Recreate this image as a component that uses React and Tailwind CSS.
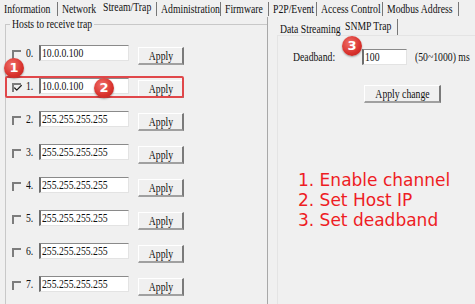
import { Check } from "lucide-react";

const tabs = [
  { name: "Information", w: "w-[58px]", sep: true },
  { name: "Network", w: "w-[41px]", sep: false },
  { name: "Stream/Trap", w: "w-[58px]", sep: true, active: true },
  { name: "Administration", w: "w-[64px]", sep: true },
  { name: "Firmware", w: "w-[48px]", sep: true },
  { name: "P2P/Event", w: "w-[48px]", sep: true },
  { name: "Access Control", w: "w-[66px]", sep: true },
  { name: "Modbus Address", w: "w-[76px]", sep: true },
];

const hosts = [
  "10.0.0.100",
  "10.0.0.100",
  "255.255.255.255",
  "255.255.255.255",
  "255.255.255.255",
  "255.255.255.255",
  "255.255.255.255",
  "255.255.255.255",
];

// the dialog font is a narrow one, squeeze the serif a bit
const N = ({ children, center }) => (
  <span
    className={`inline-block whitespace-nowrap scale-x-[0.81] ${center ? "origin-center" : "origin-left"}`}
  >
    {children}
  </span>
);

// numbered red markers drawn over the screenshot
const Marker = ({ n, className }) => (
  <div
    className={`absolute w-[20px] h-[20px] rounded-full flex items-center justify-center text-white text-[13px] font-bold bg-[radial-gradient(circle_at_40%_35%,#f0706a,#d8312c_60%,#b81f1c)] shadow-[0_1px_2px_rgba(0,0,0,0.35)] ${className}`}
    style={{ fontFamily: "'DejaVu Sans', sans-serif" }}
  >
    {n}
  </div>
);

const Button = ({ children, className }) => (
  <div
    className={`flex items-center justify-center shrink-0 bg-[#f0f0f0] border-t border-l border-t-white border-l-white border-r-2 border-b-2 border-r-[#7a7a7a] border-b-[#a0a0a0] ${className}`}
  >
    <N center>{children}</N>
  </div>
);

const TextBox = ({ value, className }) => (
  <div
    className={`bg-white shrink-0 border-t border-l-2 border-r border-b border-t-[#8a8a8a] border-l-[#6e6e6e] border-r-[#e3e3e3] border-b-[#e3e3e3] pl-[1px] leading-[14px] overflow-hidden ${className}`}
  >
    <N>{value}</N>
  </div>
);

const HostRow = ({ i, ip }) => (
  <div className="flex items-start h-[33px]">
    <div className="w-[9px] h-[9px] mt-[5px] shrink-0 border-t-2 border-l-2 border-t-[#7c7c7c] border-l-[#7c7c7c] ml-[6px] relative">
      {i === 1 && (
        <Check size={10} strokeWidth={3} className="absolute -left-[1px] -top-[2px] text-[#222]" />
      )}
    </div>
    <span className="ml-[5px] w-[13px] shrink-0 mt-[1px] leading-[14px]">
      <N>{i}.</N>
    </span>
    <TextBox value={ip} className="w-[90px] h-[16px]" />
    <Button className="ml-[9px] w-[46px] h-[18px] mt-[2px]">Apply</Button>
  </div>
);

export default function App() {
  return (
    <div
      className="relative w-[475px] h-[304px] bg-[#f0f0f0] text-[12px] text-[#111] overflow-hidden"
      style={{ fontFamily: "'Liberation Serif', serif" }}
    >
      {/* top tab strip */}
      <div className="flex h-[17px] items-start">
        {tabs.map((t) => (
          <div key={t.name} className={`${t.w} shrink-0 flex items-start h-[17px]`}>
            <span
              className={`flex-1 min-w-0 pl-[4px] leading-[14px] ${t.active ? "mt-[0px]" : "mt-[2px]"}`}
            >
              <N>{t.name}</N>
            </span>
            {t.sep && <div className="w-px shrink-0 h-[14px] mt-[2px] bg-[#777]" />}
          </div>
        ))}
      </div>

      <div className="flex h-[287px]">
        {/* left: hosts */}
        <div className="w-[268px] shrink-0 border-r border-r-[#a8a8a8] pl-[5px] pt-[7px]">
          <div className="relative border-t border-l border-[#c8c8c8] h-full">
            <span className="absolute -top-[8px] left-[4px] px-[2px] bg-[#f0f0f0] leading-[14px] w-[84px]">
              <N>Hosts to receive trap</N>
            </span>
            <div className="pt-[20px]">
              {hosts.map((ip, i) => (
                <HostRow key={i} i={i} ip={ip} />
              ))}
            </div>
          </div>
        </div>

        {/* right: inner tabs */}
        <div className="flex-1 min-w-0 flex flex-col pl-[9px] pt-[2px]">
          <div className="flex h-[16px] items-start">
            <span className="pl-[3px] mt-[3px] leading-[14px] w-[68px] shrink-0">
              <N>Data Streaming</N>
            </span>
            <span className="w-[53px] shrink-0 leading-[14px] border-r border-r-[#777] h-[16px]">
              <N>SNMP Trap</N>
            </span>
          </div>
          <div className="flex-1 border-l border-t border-[#e4e4e4] pl-[15px] pt-[13px]">
            <div className="flex items-start h-[16px] leading-[14px]">
              <span className="w-[69px] shrink-0 mt-[1px]">
                <N>Deadband:</N>
              </span>
              <TextBox value="100" className="w-[45px] h-[16px]" />
              <span className="ml-[8px] mt-[1px]">
                <N>(50~1000) ms</N>
              </span>
            </div>
            <Button className="ml-[71px] mt-[20px] w-[77px] h-[18px]">Apply change</Button>

            <div
              className="mt-[67px] ml-[5px] text-[17px] leading-[20px] text-[#ee1c24] whitespace-nowrap"
              style={{ fontFamily: "'DejaVu Sans', sans-serif" }}
            >
              <div>1. Enable channel</div>
              <div>2. Set Host IP</div>
              <div>3. Set deadband</div>
            </div>
          </div>
        </div>
      </div>

      {/* annotations */}
      <div className="absolute left-[5px] top-[76px] w-[179px] h-[22px] border-2 border-[#e0474a] rounded-[2px]" />
      <Marker n="1" className="left-[4px] top-[58px]" />
      <Marker n="2" className="left-[94px] top-[78px]" />
      <Marker n="3" className="left-[342px] top-[36px]" />
    </div>
  );
}
